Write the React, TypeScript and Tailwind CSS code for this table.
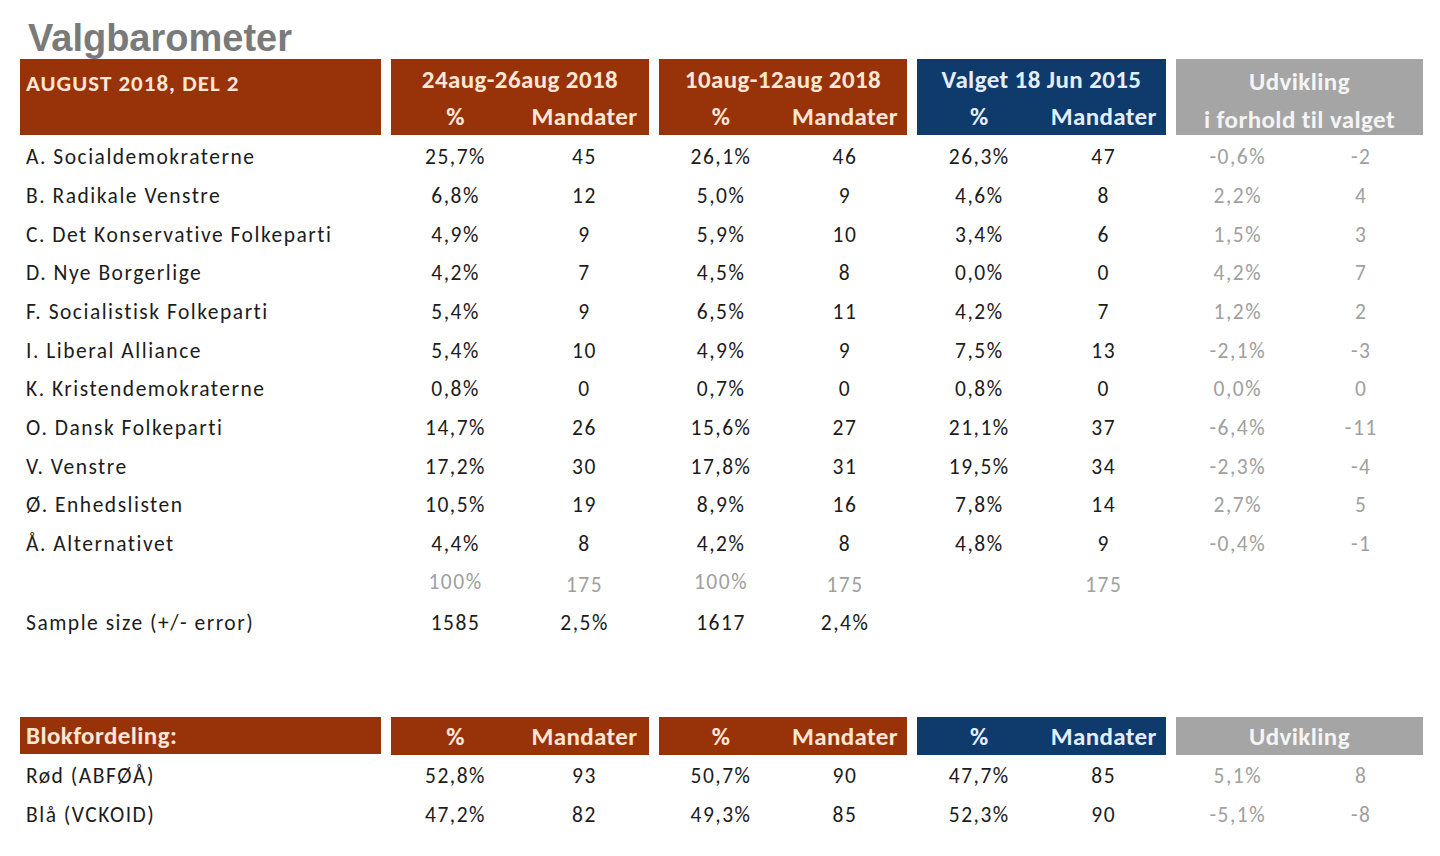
const BROWN = 'bg-[#983209]';
const BLUE = 'bg-[#0f3a6c]';
const GRAY = 'bg-[#a5a5a5]';

type Row = [string, string, string, string, string, string, string, string, string];

const PARTIES: Row[] = [
  ['A. Socialdemokraterne', '25,7%', '45', '26,1%', '46', '26,3%', '47', '-0,6%', '-2'],
  ['B. Radikale Venstre', '6,8%', '12', '5,0%', '9', '4,6%', '8', '2,2%', '4'],
  ['C. Det Konservative Folkeparti', '4,9%', '9', '5,9%', '10', '3,4%', '6', '1,5%', '3'],
  ['D. Nye Borgerlige', '4,2%', '7', '4,5%', '8', '0,0%', '0', '4,2%', '7'],
  ['F. Socialistisk Folkeparti', '5,4%', '9', '6,5%', '11', '4,2%', '7', '1,2%', '2'],
  ['I. Liberal Alliance', '5,4%', '10', '4,9%', '9', '7,5%', '13', '-2,1%', '-3'],
  ['K. Kristendemokraterne', '0,8%', '0', '0,7%', '0', '0,8%', '0', '0,0%', '0'],
  ['O. Dansk Folkeparti', '14,7%', '26', '15,6%', '27', '21,1%', '37', '-6,4%', '-11'],
  ['V. Venstre', '17,2%', '30', '17,8%', '31', '19,5%', '34', '-2,3%', '-4'],
  ['Ø. Enhedslisten', '10,5%', '19', '8,9%', '16', '7,8%', '14', '2,7%', '5'],
  ['Å. Alternativet', '4,4%', '8', '4,2%', '8', '4,8%', '9', '-0,4%', '-1'],
];

const BLOCKS: Row[] = [
  ['Rød (ABFØÅ)', '52,8%', '93', '50,7%', '90', '47,7%', '85', '5,1%', '8'],
  ['Blå (VCKOID)', '47,2%', '82', '49,3%', '85', '52,3%', '90', '-5,1%', '-8'],
];

const GRID = 'grid grid-cols-[361px_258px_248px_249px_247px] gap-x-[10px]';
const PAIR = 'grid grid-cols-2 items-center text-center';
const BODY = 'text-[21.5px] tracking-[1.5px]';

function DataRow({ row }: { row: Row }) {
  return (
    <div className={`${GRID} ${BODY} h-[38.7px] items-center text-[#1c1c1c]`}>
      <div className="pl-[6px]">{row[0]}</div>
      <div className={PAIR}><span>{row[1]}</span><span>{row[2]}</span></div>
      <div className={PAIR}><span>{row[3]}</span><span>{row[4]}</span></div>
      <div className={PAIR}><span>{row[5]}</span><span>{row[6]}</span></div>
      <div className={`${PAIR} text-[#a0a0a0]`}><span>{row[7]}</span><span>{row[8]}</span></div>
    </div>
  );
}

function SubHead({ bg, color }: { bg: string; color: string }) {
  return (
    <div className={`${bg} ${PAIR} h-[38px] font-bold ${color}`}>
      <span>%</span>
      <span>Mandater</span>
    </div>
  );
}

export default function App() {
  return (
    <div
      className="min-h-[856px] w-[1440px] bg-white pl-[20px] pt-[18px]"
      style={{ fontFamily: 'Carlito, Lato, "Liberation Sans", sans-serif' }}
    >
      <h1
        className="pl-[8px] text-[38px] font-bold leading-[41px] text-[#7a7a7a]"
        style={{ fontFamily: '"Liberation Sans", Arial, sans-serif' }}
      >
        Valgbarometer
      </h1>

      {/* Main header */}
      <div className={`${GRID} text-[25px] leading-none tracking-[0.4px]`}>
        <div className={`${BROWN} h-[76px] pl-[6px] pt-[13px] text-[23px] font-bold tracking-[1px] text-[#fde6d6]`}>
          AUGUST 2018, DEL 2
        </div>
        <div className="flex flex-col text-[#fde6d6]">
          <div className={`${BROWN} flex h-[38px] items-center justify-center pt-[2px] font-bold`}>24aug-26aug 2018</div>
          <SubHead bg={BROWN} color="text-[#fde6d6]" />
        </div>
        <div className="flex flex-col text-[#fde6d6]">
          <div className={`${BROWN} flex h-[38px] items-center justify-center pt-[2px] font-bold`}>10aug-12aug 2018</div>
          <SubHead bg={BROWN} color="text-[#fde6d6]" />
        </div>
        <div className="flex flex-col text-[#e3eefa]">
          <div className={`${BLUE} flex h-[38px] items-center justify-center pt-[2px] font-bold`}>Valget 18 Jun 2015</div>
          <SubHead bg={BLUE} color="text-[#e3eefa]" />
        </div>
        <div className={`${GRAY} flex h-[76px] flex-col items-center font-bold text-[#f4f4f4]`}>
          <div className="flex h-[44px] items-center">Udvikling</div>
          <div className="flex h-[32px] items-center">i forhold til valget</div>
        </div>
      </div>

      <div className="mt-[3px]">
        {PARTIES.map((r) => (
          <DataRow key={r[0]} row={r} />
        ))}
      </div>

      <div className={`${GRID} ${BODY} h-[38.7px] items-center text-[#a0a0a0]`}>
        <div />
        <div className={PAIR}><span className="-mt-[2px]">100%</span><span className="mt-[4px]">175</span></div>
        <div className={PAIR}><span className="-mt-[2px]">100%</span><span className="mt-[4px]">175</span></div>
        <div className={PAIR}><span /><span className="mt-[4px]">175</span></div>
        <div />
      </div>
      <div className={`${GRID} ${BODY} h-[41px] items-center text-[#1c1c1c]`}>
        <div className="pl-[6px]">Sample size (+/- error)</div>
        <div className={PAIR}><span>1585</span><span>2,5%</span></div>
        <div className={PAIR}><span>1617</span><span>2,4%</span></div>
        <div />
        <div />
      </div>

      {/* Block distribution */}
      <div className={`${GRID} mt-[74px] text-[25px] leading-none tracking-[0.4px]`}>
        <div className={`${BROWN} flex h-[37px] items-center pl-[6px] font-bold text-[#fde6d6]`}>Blokfordeling:</div>
        <SubHead bg={BROWN} color="text-[#fde6d6]" />
        <SubHead bg={BROWN} color="text-[#fde6d6]" />
        <SubHead bg={BLUE} color="text-[#e3eefa]" />
        <div className={`${GRAY} flex h-[38px] items-center justify-center font-bold text-[#f4f4f4]`}>Udvikling</div>
      </div>
      <div className="mt-[2px]">
        {BLOCKS.map((r) => (
          <DataRow key={r[0]} row={r} />
        ))}
      </div>
    </div>
  );
}
